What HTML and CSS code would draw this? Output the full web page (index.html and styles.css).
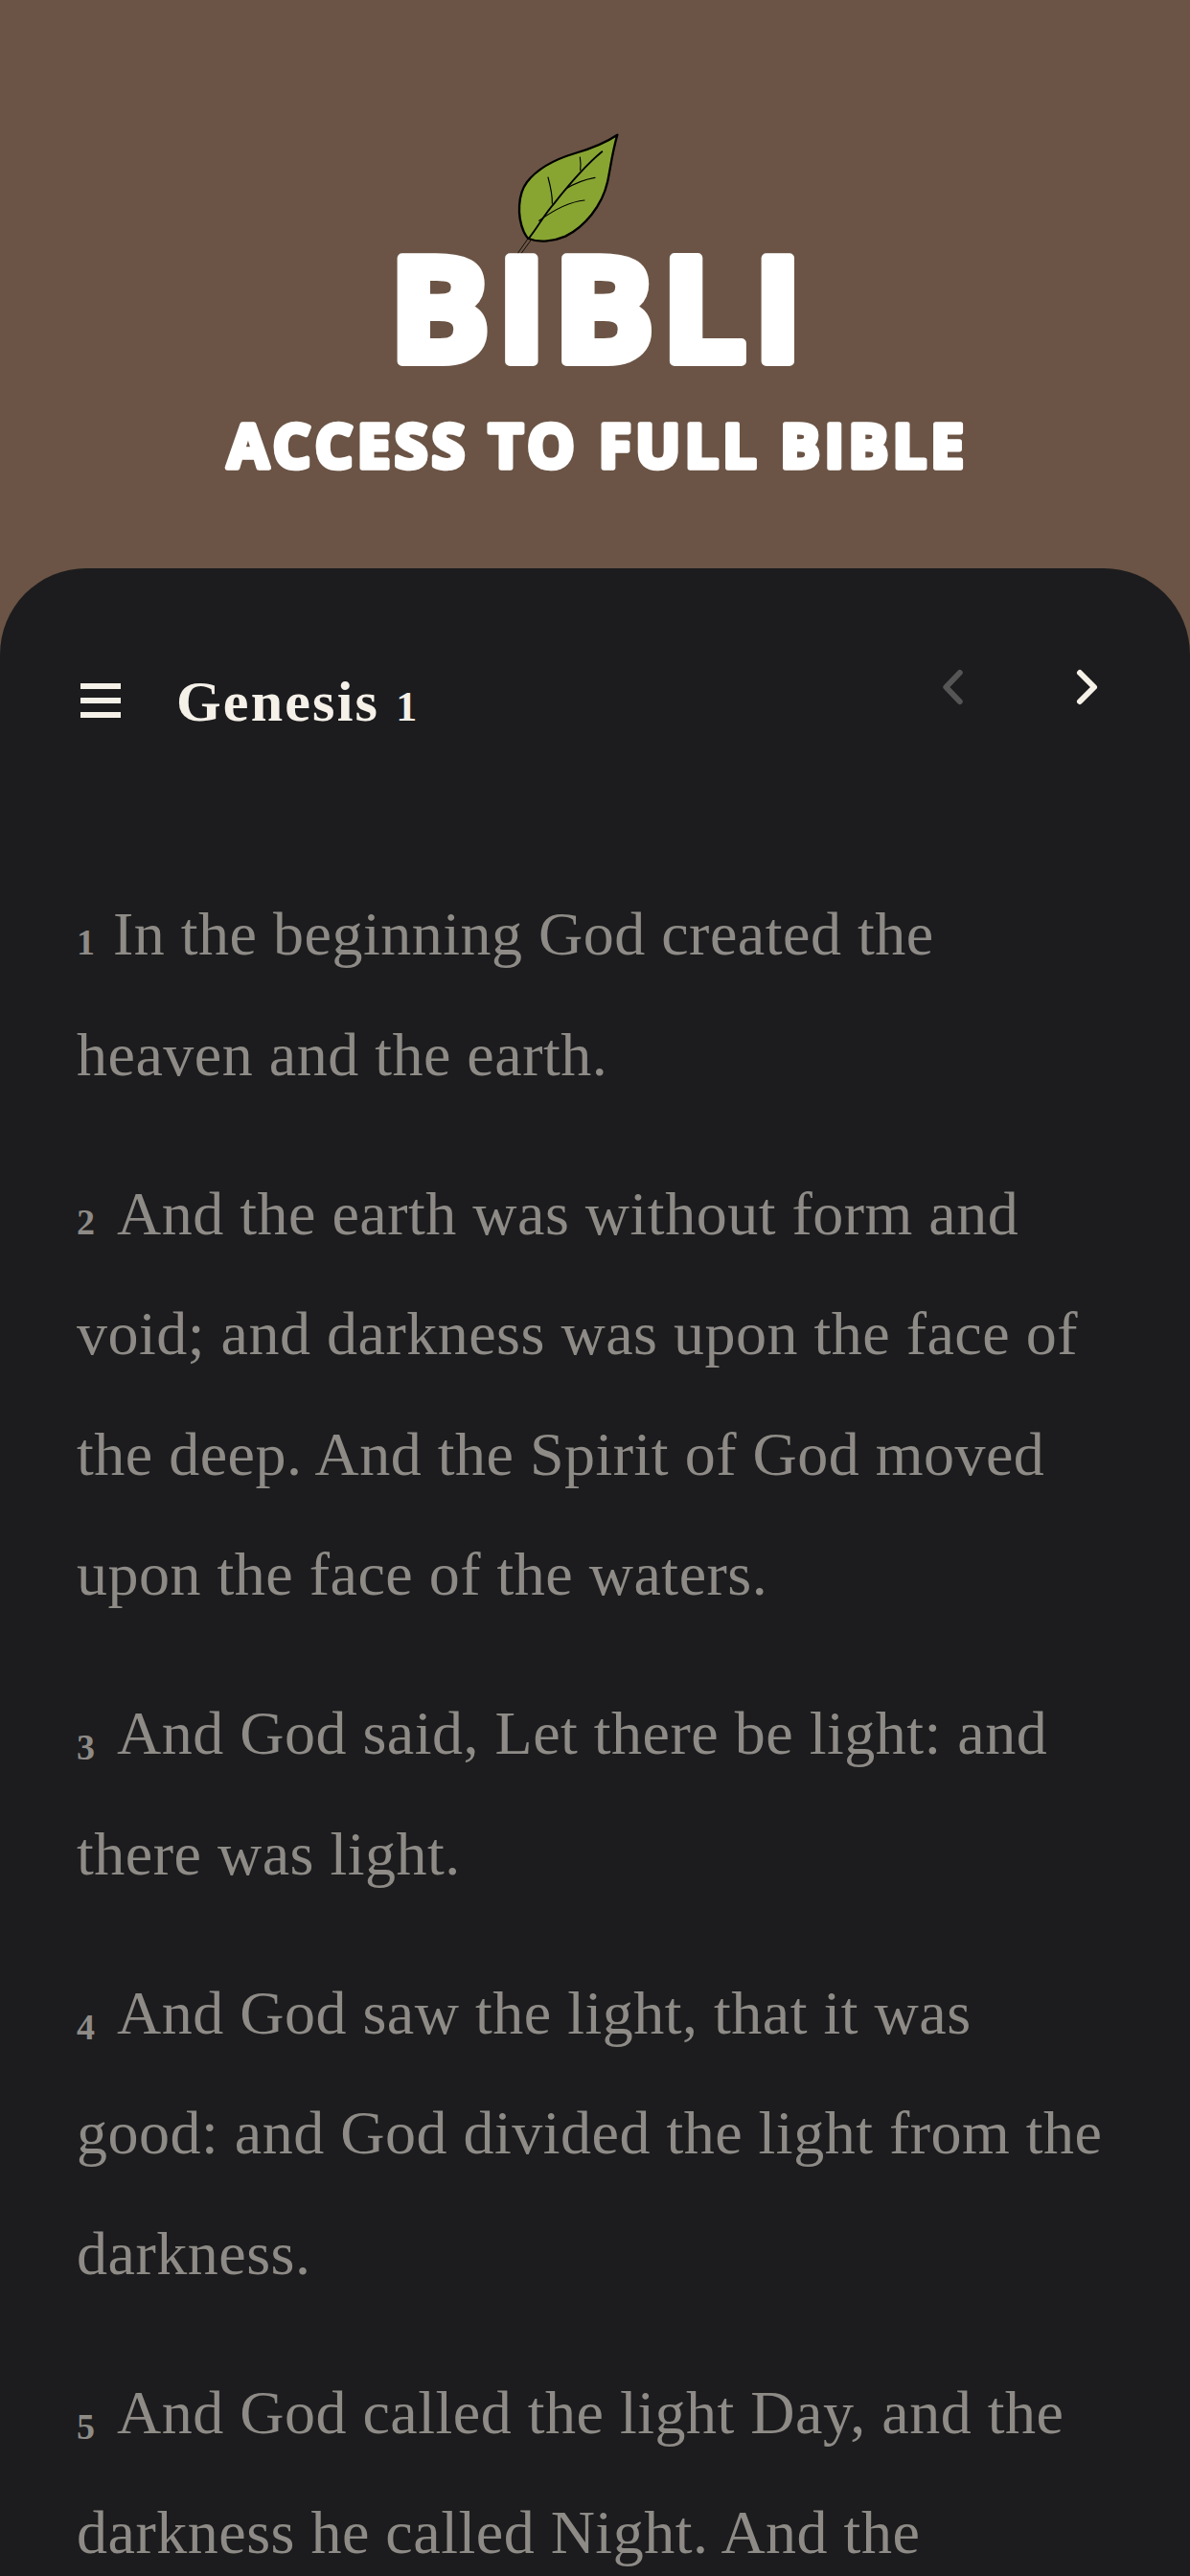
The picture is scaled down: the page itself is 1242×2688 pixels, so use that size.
FILE: index.html
```html
<!DOCTYPE html>
<html lang="en">
<head>
<meta charset="utf-8">
<title>Bibli</title>
<link rel="stylesheet" href="styles.css">
</head>
<body>
<div class="page">
  <header class="hero">
    <div class="brand">
      <svg class="leaf" viewBox="0 0 510 450" aria-hidden="true">
        <path d="M153 372 L117 424 M163 376 L128 424" fill="none" stroke="#000" stroke-width="2.5"/>
        <path class="leaf-blade" d="M433 47 C405 66 350 90 300 105 C240 123 185 150 150 195 C122 232 118 300 140 350 C146 362 150 368 155 372 C190 386 235 380 270 365 C330 335 385 270 402 195 C412 150 415 110 433 47 Z"/>
        <path class="leaf-vein" d="M155 372 C185 335 205 295 235 262 C280 205 330 145 385 100" stroke-width="5.5"/>
        <path class="leaf-vein thin" d="M188 316 C230 285 280 257 330 252"/>
        <path class="leaf-vein thin" d="M272 216 C300 198 330 187 363 181"/>
        <path class="leaf-vein thin" d="M229 262 C230 235 224 210 216 180"/>
        <path class="leaf-vein thin" d="M317 158 C319 145 318 130 316 117"/>
      </svg>
      <svg class="wordmark" viewBox="0 0 480 150" role="img" aria-label="BIBLI"><text x="244" y="127">BIBLI</text></svg>
      <svg class="tagline" viewBox="0 0 860 70" role="img" aria-label="ACCESS TO FULL BIBLE"><text x="433" y="57.5">ACCESS TO FULL BIBLE</text></svg>
    </div>
  </header>
  <main class="reader">
    <div class="toolbar">
      <button class="menu-btn" type="button" aria-label="Menu"><span></span><span></span><span></span></button>
      <h2 class="chapter">Genesis <span class="chapter-num">1</span></h2>
      <div class="pager">
        <svg class="chev chev-off" viewBox="0 0 30 40"><path d="M22.7 5 L8.3 20 L22.7 35"/></svg>
        <svg class="chev" viewBox="0 0 30 40"><path d="M8 5 L23 20 L8 35"/></svg>
      </div>
    </div>
    <div class="verses">
      <p class="verse"><span class="num">1</span>In the beginning God created the heaven and the earth.</p>
      <p class="verse"><span class="num wide">2</span>And the earth was without form and void; and darkness was upon the face of the deep. And the Spirit of God moved upon the face of the waters.</p>
      <p class="verse"><span class="num wide low">3</span>And God said, Let there be light: and there was light.</p>
      <p class="verse"><span class="num wide low">4</span>And God saw the light, that it was good: and God divided the light from the darkness.</p>
      <p class="verse"><span class="num wide low">5</span>And God called the light Day, and the darkness he called Night. And the evening and the morning were the first day.</p>
    </div>
  </main>
</div>
</body>
</html>
```
FILE: styles.css
```css
* { box-sizing: border-box; }
html, body { margin: 0; padding: 0; background: #6b5445; }
.page { width: 1242px; height: 2688px; overflow: hidden; display: flex; flex-direction: column; }

.hero { height: 593px; flex: none; padding-top: 250px; }
.brand { position: relative; display: flex; flex-direction: column; align-items: center; }
.leaf { position: absolute; left: 500px; top: -125px; width: 170px; height: 150px; }
.leaf-blade { fill: #88a532; stroke: #000; stroke-width: 7; stroke-linejoin: round; }
.leaf-vein { fill: none; stroke: #000; stroke-linecap: round; }
.leaf-vein.thin { stroke-width: 3.5; }

.wordmark { position: relative; display: block; width: 480px; height: 150px; overflow: visible; }
.wordmark text { font-family: "Open Sans", sans-serif; font-weight: 700; font-size: 150px; letter-spacing: 6.5px; text-anchor: middle; fill: #fff; stroke: #fff; stroke-width: 10px; stroke-linejoin: round; transform: scaleX(1.05); transform-origin: 240px 0; }
.tagline { display: block; width: 860px; height: 70px; margin-top: 30px; overflow: visible; }
.tagline text { font-family: "Open Sans", sans-serif; font-weight: 700; font-size: 62px; letter-spacing: 4.5px; text-anchor: middle; fill: #fff; stroke: #fff; stroke-width: 5.5px; stroke-linejoin: round; }

.reader { flex: 1; background: #1c1c1e; border-radius: 90px 90px 0 0; padding: 0 80px; }
.toolbar { height: 319px; display: flex; align-items: flex-start; padding-top: 104px; }
.menu-btn { width: 42px; margin: 16px 58px 0 4px; padding: 0; border: 0; background: none; display: flex; flex-direction: column; gap: 9px; flex: none; }
.menu-btn span { display: block; height: 6px; width: 42px; background: #f5f0e8; }
.chapter { margin: 3px 0 0; font-family: "Liberation Serif", serif; font-weight: 700; font-size: 60px; line-height: 64px; letter-spacing: 2.2px; color: #f5f0e8; }
.chapter-num { font-size: 44px; }
.pager { margin-left: auto; margin-right: 13px; display: flex; gap: 110px; }
.chev { display: block; width: 30px; height: 40px; }
.chev path { fill: none; stroke: #f5f0e8; stroke-width: 6; stroke-linecap: round; stroke-linejoin: round; }
.chev-off path { stroke: #555; }

.verses { display: flex; flex-direction: column; gap: 40.5px; }
.verse { margin: 0; font-family: "Liberation Serif", serif; font-size: 64px; line-height: 125.5px; letter-spacing: 0.5px; color: #8e8b87; }
.num { display: inline-block; font-size: 38px; line-height: 1; font-weight: 700; letter-spacing: 0; margin-right: 19px; }
.wide { margin-right: 23px; }
.low { position: relative; top: 6px; }
```
